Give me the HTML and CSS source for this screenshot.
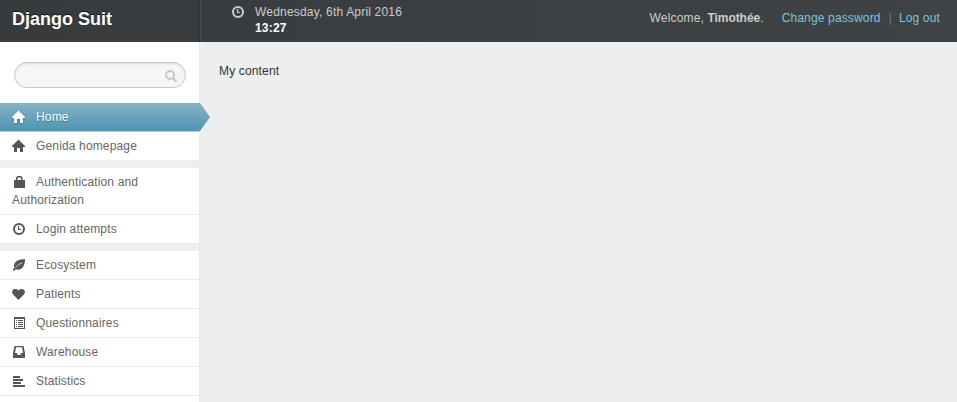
FILE: index.html
```html
<!DOCTYPE html>
<html lang="en">
<head>
<meta charset="utf-8">
<title>Django Suit</title>
<link rel="stylesheet" href="styles.css">
</head>
<body>
<svg class="symbols" aria-hidden="true">
  <symbol id="home" viewBox="0 0 14 14"><path d="M6.5 .5 L0 7 V8 H2 V13 H5 V9 H8 V13 H11 V8 H13 V7 Z"/></symbol>
  <symbol id="clock" viewBox="0 0 14 14"><circle cx="7" cy="7" r="5" fill="none" stroke="currentColor" stroke-width="2"/><path d="M6 4 H7.2 V7 H9 V8 H6Z"/></symbol>
  <symbol id="lock" viewBox="0 0 14 14"><path d="M2 5 H4 V3.2 Q4 1 6.2 1 H8.3 Q10.5 1 10.5 3.2 V5 H13 V13 H2Z M5.5 5 H9 V3.6 Q9 2.5 7.9 2.5 H6.6 Q5.5 2.5 5.5 3.6Z" fill-rule="evenodd"/></symbol>
  <symbol id="leaf" viewBox="0 0 14 14"><path d="M13 1 C12 1.3 10 1.2 7.5 1.8 C3.5 2.8 1.3 6 2.3 9.7 L.8 11.7 L1.8 13 L4 11.3 C7.5 12.8 11 10.5 12.2 6.8 C12.9 4.8 13 3 13 1Z"/><path d="M3.6 9.6 C5 7.6 7 6.2 10 4.8" fill="none" stroke="#fff" stroke-width=".7"/></symbol>
  <symbol id="heart" viewBox="0 0 14 14"><path d="M6.5 13 L1.1 7.6 C-1 4.7 .5 2 3.3 2 C5 2 6 2.7 6.5 3.5 C7 2.7 8 2 9.7 2 C12.5 2 14 4.7 11.9 7.6Z"/></symbol>
  <symbol id="list" viewBox="0 0 14 14"><path d="M2 1 H13 V13 H2Z M3 3 V12 H12 V3Z" fill-rule="evenodd"/><path d="M4 4h1v1H4z M6 4h5v1H6z M4 6h1v1H4z M6 6h5v1H6z M4 8h1v1H4z M6 8h5v1H6z M4 10h1v1H4z M6 10h5v1H6z"/></symbol>
  <symbol id="inbox" viewBox="0 0 14 14"><path d="M2.5 1 H11.5 L13 8 V13 H1 V8Z M4 2.3 L3 8 H4.8 L5.8 10 H8.2 L9.2 8 H11 L10 2.3Z" fill-rule="evenodd"/></symbol>
  <symbol id="bars" viewBox="0 0 14 14"><path d="M1 2h7v2H1z M1 5h10v2H1z M1 8h8v2H1z M1 11h12v2H1z"/></symbol>
  <symbol id="search" viewBox="0 0 14 14"><circle cx="6" cy="6" r="4" fill="none" stroke="currentColor" stroke-width="2"/><path d="M9 9 L12.6 12.6" stroke="currentColor" stroke-width="2.4"/></symbol>
</svg>
<header class="header">
  <h1 class="brand">Django Suit</h1>
  <div class="date-time">
    <svg class="icon"><use href="#clock"/></svg>
    <div><div class="date">Wednesday, 6th April 2016</div><div class="time">13:27</div></div>
  </div>
  <div class="user-tools">
    <span class="welcome">Welcome, <strong>Timothée</strong>.</span>
    <a href="#">Change password</a><span class="separator">|</span><a href="#">Log out</a>
  </div>
</header>
<div class="page">
  <aside class="sidebar">
    <form class="search"><input type="text" aria-label="Search"><svg class="icon search-icon"><use href="#search"/></svg></form>
    <nav>
      <ul class="menu">
        <li class="active"><a href="#"><svg class="icon"><use href="#home"/></svg>Home</a></li>
        <li><a href="#"><svg class="icon"><use href="#home"/></svg>Genida homepage</a></li>
        <li class="group"><a href="#"><svg class="icon"><use href="#lock"/></svg>Authentication and Authorization</a></li>
        <li><a href="#"><svg class="icon"><use href="#clock"/></svg>Login attempts</a></li>
        <li class="group"><a href="#"><svg class="icon"><use href="#leaf"/></svg>Ecosystem</a></li>
        <li><a href="#"><svg class="icon"><use href="#heart"/></svg>Patients</a></li>
        <li><a href="#"><svg class="icon"><use href="#list"/></svg>Questionnaires</a></li>
        <li><a href="#"><svg class="icon"><use href="#inbox"/></svg>Warehouse</a></li>
        <li><a href="#"><svg class="icon"><use href="#bars"/></svg>Statistics</a></li>
      </ul>
    </nav>
  </aside>
  <main class="content">My content</main>
</div>
</body>
</html>
```
FILE: styles.css
```css
* { box-sizing: border-box; }
body {
  margin: 0;
  height: 402px;
  overflow: hidden;
  display: flex;
  flex-direction: column;
  background: #edeef0;
  color: #333;
  font: 12px/18px "Liberation Sans", Arial, sans-serif;
  letter-spacing: .15px;
}
a { color: inherit; text-decoration: none; }
.symbols { position: absolute; width: 0; height: 0; }
.icon { width: 14px; height: 14px; fill: currentColor; flex: none; }

.header {
  flex: none;
  display: flex;
  height: 42px;
  background: linear-gradient(90deg, #383b3d, #404345);
  color: #ccc;
}
.brand {
  width: 200px;
  margin: 0;
  padding: 8px 0 0 12px;
  border-right: 1px solid #303335;
  color: #fff;
  font-size: 18px;
  line-height: 22px;
  letter-spacing: 0;
  text-shadow: 0 -1px 0 #111;
}
.date-time {
  display: flex;
  gap: 10px;
  padding: 4px 0 0 30px;
  border-left: 1px solid #4b4e50;
  line-height: 16px;
  letter-spacing: .19px;
}
.date-time .icon { margin-top: 1px; }
.time { color: #fff; font-weight: bold; }
.user-tools {
  display: flex;
  margin-left: auto;
  padding: 9px 17px 0 0;
}
.user-tools a { color: #7ec3dc; }
.user-tools strong { letter-spacing: -.05px; }
.welcome { margin-right: 18px; }
.separator { margin: 0 7px 0 8px; color: #747779; }

.page { flex: 1; min-height: 0; display: flex; }
.sidebar {
  width: 200px;
  flex: none;
  background: #fff;
  border-right: 1px solid #e8e9eb;
}
.search {
  display: flex;
  align-items: center;
  width: 172px;
  height: 26px;
  margin: 20px 0 15px 14px;
  padding-right: 7px;
  border: 1px solid #c8c8c8;
  border-radius: 13px;
  background: #f5f6f8;
  box-shadow: inset 0 1px 2px #ddd;
}
.search input { flex: 1; min-width: 0; border: 0; background: none; outline: 0; }
.search-icon { margin-top: 1px; color: #c8c8c8; }
.menu { margin: 0; padding: 0; list-style: none; color: #666; }
.menu a {
  display: block;
  padding: 5px 12px;
  border-bottom: 1px solid #ebebeb;
}
.menu .icon { margin-right: 10px; vertical-align: -3px; color: #555; }
.group { border-top: 7px solid #efefef; }
.menu .active a {
  position: relative;
  background: linear-gradient(#85b2c5, #5095b2);
  border-bottom-color: #bec8cd;
  color: #fff;
  text-shadow: 0 1px 1px #3c7188;
}
.menu .active .icon { color: #fff; filter: drop-shadow(0 1px 1px #3c7188); }
.active a::after {
  content: "";
  position: absolute;
  left: 199px;
  top: 0;
  width: 11px;
  height: 28px;
  background: linear-gradient(#85b2c5, #5095b2);
  clip-path: polygon(0 0, 1px 0, 100% 50%, 1px 100%, 0 100%);
}
.content { padding: 20px 19px; }
```
